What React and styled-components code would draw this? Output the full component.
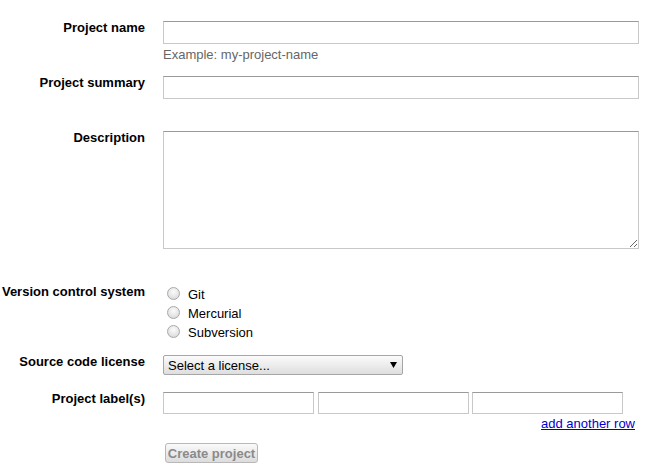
import React from "react";
import styled, { createGlobalStyle } from "styled-components";

const GlobalStyle = createGlobalStyle`
  body {
    margin: 0;
    background: #fff;
    font-family: "Liberation Sans", Arial, sans-serif;
    font-size: 13px;
    color: #000;
  }
`;

const Form = styled.form`
  display: flex;
  flex-direction: column;
  padding-top: 21px;
  width: 649px;
`;

const Row = styled.div`
  display: grid;
  grid-template-columns: 145px 476px;
  column-gap: 18px;
  align-items: start;
  margin-top: ${(p) => p.$mt || 0}px;
`;

const Label = styled.label`
  text-align: right;
  font-weight: bold;
  font-size: 13px;
  line-height: 16px;
  margin-top: -1px;
  white-space: nowrap;
`;

const Field = styled.div`
  display: flex;
  flex-direction: column;
  align-items: flex-start;
`;

const TextInput = styled.input`
  box-sizing: border-box;
  width: ${(p) => p.$w || 476}px;
  height: ${(p) => p.$h || 23}px;
  margin: 0;
  padding: 2px 4px;
  border: 1px solid #c8c8c8;
  border-top-color: #9a9a9a;
  font: 13px "Liberation Sans", Arial, sans-serif;
  background: #fff;
  outline: none;
`;

const TextArea = styled.textarea`
  box-sizing: border-box;
  width: 476px;
  height: 118px;
  margin: 0;
  padding: 2px 4px;
  border: 1px solid #c8c8c8;
  border-top-color: #9a9a9a;
  font: 13px "Liberation Sans", Arial, sans-serif;
  resize: both;
  outline: none;
`;

const Hint = styled.div`
  margin-top: 3px;
  line-height: 16px;
  color: #666;
`;

const RadioList = styled.div`
  display: flex;
  flex-direction: column;
  padding-left: 4px;
`;

const RadioItem = styled.label`
  display: flex;
  align-items: flex-start;
  line-height: 19px;
  height: 19px;
`;

const Radio = styled.input.attrs({ type: "radio" })`
  appearance: none;
  box-sizing: border-box;
  width: 13px;
  height: 13px;
  margin: 2px 8px 0 0;
  border: 1px solid #a9a9a9;
  border-radius: 50%;
  background: radial-gradient(circle at 50% 35%, #fbfbfb 0%, #e4e4e4 60%, #cfcfcf 100%);
`;

const SelectWrap = styled.div`
  position: relative;
  width: 240px;
  height: 20px;
`;

const Select = styled.select`
  appearance: none;
  box-sizing: border-box;
  width: 100%;
  height: 100%;
  margin: 0;
  padding: 0 4px;
  border: 1px solid #a6a6a6;
  border-radius: 2px;
  background: linear-gradient(#fbfbfb, #dedede);
  font: 13px "Liberation Sans", Arial, sans-serif;
  color: #000;
  outline: none;
`;

const Arrow = styled.svg`
  position: absolute;
  right: 6px;
  top: 7px;
  pointer-events: none;
`;

const LabelInputs = styled.div`
  display: flex;
  gap: 3.5px;
`;

const MoreLink = styled.a`
  align-self: stretch;
  text-align: right;
  padding-right: 4px;
  margin-top: 1px;
  line-height: 17px;
  color: #0000cc;
  text-decoration: underline;
  cursor: pointer;
`;

const Button = styled.button`
  box-sizing: border-box;
  margin-left: 2px;
  width: 93px;
  height: 20px;
  padding: 0;
  border: 1px solid #b8b8b8;
  border-radius: 3px;
  background: linear-gradient(#fafafa, #dcdcdc);
  font: bold 13px "Liberation Sans", Arial, sans-serif;
  color: #8a8a8a;
`;

export default function App() {
  return (
    <>
      <GlobalStyle />
      <Form onSubmit={(e) => e.preventDefault()}>
        <Row>
          <Label>Project name</Label>
          <Field>
            <TextInput />
            <Hint>Example: my-project-name</Hint>
          </Field>
        </Row>
        <Row $mt={13}>
          <Label>Project summary</Label>
          <Field>
            <TextInput />
          </Field>
        </Row>
        <Row $mt={32}>
          <Label>Description</Label>
          <Field>
            <TextArea />
          </Field>
        </Row>
        <Row $mt={36}>
          <Label>Version control system</Label>
          <RadioList>
            {["Git", "Mercurial", "Subversion"].map((name) => (
              <RadioItem key={name}>
                <Radio name="vcs" value={name} />
                {name}
              </RadioItem>
            ))}
          </RadioList>
        </Row>
        <Row $mt={13}>
          <Label>Source code license</Label>
          <Field>
            <SelectWrap>
              <Select defaultValue="">
                <option value="">Select a license...</option>
              </Select>
              <Arrow width="7" height="6" viewBox="0 0 7 6">
                <path d="M0 0h7L3.5 6z" fill="#000" />
              </Arrow>
            </SelectWrap>
          </Field>
        </Row>
        <Row $mt={17}>
          <Label>Project label(s)</Label>
          <Field>
            <LabelInputs>
              <TextInput $w={151} $h={22} />
              <TextInput $w={151} $h={22} />
              <TextInput $w={151} $h={22} />
            </LabelInputs>
            <MoreLink>add another row</MoreLink>
          </Field>
        </Row>
        <Row $mt={11}>
          <span />
          <Field>
            <Button type="submit" disabled>
              Create project
            </Button>
          </Field>
        </Row>
      </Form>
    </>
  );
}
